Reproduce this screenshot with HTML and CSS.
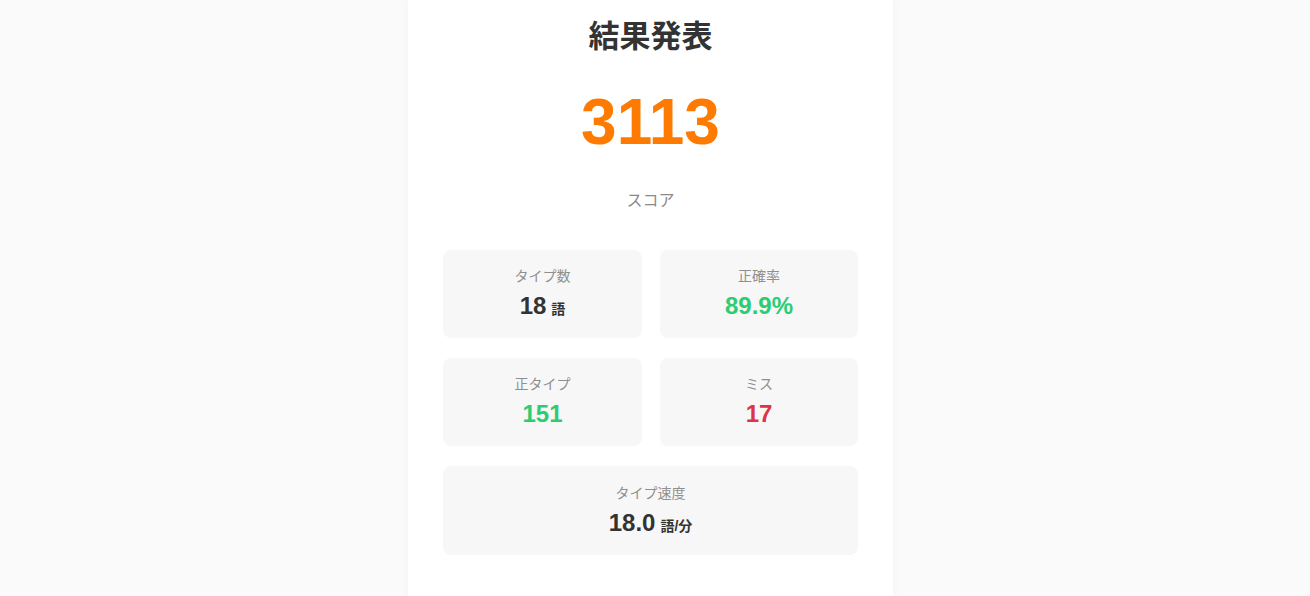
FILE: index.html
```html
<!DOCTYPE html>
<html lang="ja">
<head>
<meta charset="utf-8">
<title>結果発表</title>
<link rel="stylesheet" href="styles.css">
</head>
<body>
<div class="page">
  <main class="card">
    <h1 class="title">結果発表</h1>
    <div class="score">3113</div>
    <div class="score-label">スコア</div>
    <section class="stats">
      <div class="stat">
        <div class="stat-label">タイプ数</div>
        <div class="stat-value">18<span class="unit">語</span></div>
      </div>
      <div class="stat">
        <div class="stat-label">正確率</div>
        <div class="stat-value good">89.9%</div>
      </div>
      <div class="stat">
        <div class="stat-label">正タイプ</div>
        <div class="stat-value good">151</div>
      </div>
      <div class="stat">
        <div class="stat-label">ミス</div>
        <div class="stat-value bad">17</div>
      </div>
      <div class="stat wide">
        <div class="stat-label">タイプ速度</div>
        <div class="stat-value">18.0<span class="unit">語/分</span></div>
      </div>
    </section>
  </main>
</div>
</body>
</html>
```

FILE: styles.css
```css
html, body {
  margin: 0;
  padding: 0;
  height: 100%;
}
body {
  background: #fafafa;
  font-family: "Liberation Sans", "Noto Sans CJK JP", sans-serif;
  color: #333;
  overflow: hidden;
}
.page {
  display: flex;
  justify-content: center;
  padding-right: 9px;
  min-height: 100%;
}
.card {
  width: 485px;
  box-sizing: border-box;
  background: #fff;
  padding: 15px 35px 40px;
  box-shadow: 0 0 10px rgba(0, 0, 0, 0.035);
  text-align: center;
  min-height: 596px;
}
.title {
  margin: 0;
  font-size: 31px;
  line-height: 38px;
  font-weight: 700;
  color: #333;
  font-family: "Noto Sans CJK JP", sans-serif;
}
.score {
  margin-top: 29px;
  font-size: 64px;
  line-height: 80px;
  font-weight: 700;
  color: #ff7a00;
}
.score-label {
  margin-top: 27px;
  font-size: 16px;
  line-height: 24px;
  color: #8a8a8a;
}
.stats {
  margin-top: 37px;
  display: grid;
  grid-template-columns: 199px 198px;
  grid-template-rows: 88px 88px 89px;
  column-gap: 18px;
  row-gap: 20px;
}
.stat {
  background: #f7f7f7;
  border-radius: 8px;
  padding-top: 16px;
  box-sizing: border-box;
}
.stat.wide {
  grid-column: 1 / -1;
  padding-top: 17px;
}
.stat-label {
  font-size: 14px;
  line-height: 20px;
  color: #8f8f8f;
}
.stat-value {
  margin-top: 5px;
  height: 30px;
  font-size: 24px;
  line-height: 30px;
  font-weight: 700;
  color: #333;
}
.unit {
  font-size: 14px;
  line-height: 1;
  margin-left: 5px;
  font-weight: 700;
}
.good { color: #2ecc71; }
.bad { color: #dc3545; }
```
